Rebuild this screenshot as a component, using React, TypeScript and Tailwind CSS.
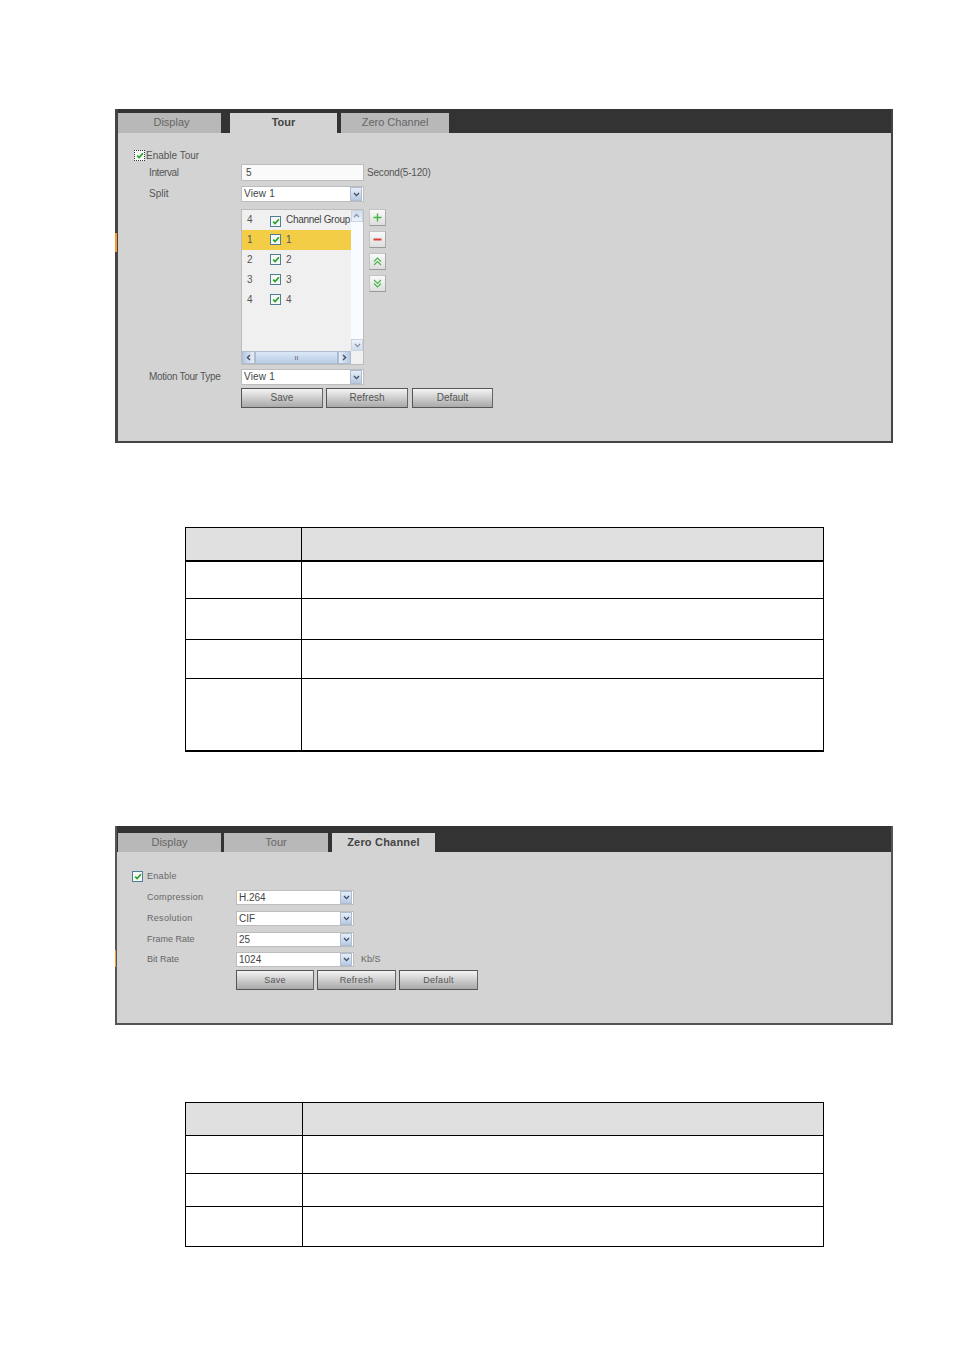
import React from "react";

const font = { fontFamily: '"Liberation Sans", Arial, sans-serif' };

function Tab({ label, active, className = "" }: { label: string; active?: boolean; className?: string }) {
  return (
    <div
      className={`flex items-center justify-center h-full pb-px text-[11px] ${
        active ? "bg-[#d3d3d3] font-bold text-[#444]" : "bg-[#b8b8b8] text-[#666]"
      } ${className}`}
    >
      {label}
    </div>
  );
}

function Check({ className = "" }: { className?: string }) {
  return (
    <span className={`flex items-center justify-center shrink-0 w-[11px] h-[11px] border border-[#4f7f97] bg-[#f6f6f6] ${className}`}>
      <svg width="8" height="7" viewBox="0 0 8 7" fill="none">
        <path d="M1.2 3.6 L3.1 5.6 L6.9 1.2" stroke="#1fa51f" strokeWidth="1.6" />
      </svg>
    </span>
  );
}

function Arrow({ className = "" }: { className?: string }) {
  return (
    <span className={`flex items-center justify-center shrink-0 w-[12px] bg-linear-to-b from-[#e6eef8] to-[#b7c9e2] border border-[#aebcd0] ${className}`}>
      <svg width="7" height="5" viewBox="0 0 7 5" fill="none">
        <path d="M1 1 L3.5 3.6 L6 1" stroke="#3d4b63" strokeWidth="1.3" />
      </svg>
    </span>
  );
}

function Select({ value, className = "" }: { value: string; className?: string }) {
  return (
    <div className={`flex bg-white border border-[#bdbdbd] pr-px ${className}`}>
      <span className="flex-1 pl-[2px] flex items-center text-[10px] text-[#444]">{value}</span>
      <Arrow />
    </div>
  );
}

function Btn({ label, className = "" }: { label: string; className?: string }) {
  return (
    <div
      className={`flex items-center justify-center h-[20px] border border-[#555] border-r-[#666] bg-linear-to-b from-[#f4f4f4] to-[#a9a9a9] text-[#555] ${className}`}
    >
      {label}
    </div>
  );
}

function IconBtn({ children }: { children: React.ReactNode }) {
  return (
    <div className="flex items-center justify-center w-[17px] h-[17px] border border-[#c4c4c4] border-r-[#aaa] border-b-[#999] bg-linear-to-b from-[#fafafa] to-[#dedede]">
      {children}
    </div>
  );
}

function ListRow({ n, label, selected }: { n: string; label: string; selected?: boolean }) {
  return (
    <div className={`flex items-center h-[20px] pl-[5px] text-[10px] text-[#555] ${selected ? "bg-[#f2cd45] text-[#333]" : ""}`}>
      <span className="w-[23px] shrink-0">{n}</span>
      <Check className="mb-px" />
      <span className="ml-[5px]">{label}</span>
    </div>
  );
}

function DocTable({
  rows,
  firstCol,
}: {
  rows: { h: string; head?: boolean; thick?: boolean }[];
  firstCol: string;
}) {
  return (
    <div className="ml-[185px] w-[639px] border-l border-r border-t border-black">
      {rows.map((r, i) => (
        <div
          key={i}
          className={`flex border-black ${r.h} ${r.thick ? "border-b-2" : "border-b"} ${r.head ? "bg-[#e0e0e0]" : "bg-white"}`}
        >
          <div className={`${firstCol} border-r border-black`} />
          <div className="flex-1" />
        </div>
      ))}
    </div>
  );
}

export default function App() {
  return (
    <div style={font} className="relative w-[954px] h-[1350px] bg-white pt-[109px] overflow-hidden">
      {/* Tour panel */}
      <div className="relative ml-[115px] w-[778px] h-[334px] bg-[#d3d3d3] border-l-[3px] border-r-2 border-b-2 border-[#444]">
        <div className="absolute left-[-3px] top-[124px] w-[2px] h-[19px] bg-[#f59a2c]" />
        <div className="flex h-[24px] pt-[4px] bg-[#333]">
          <Tab label="Display" className="w-[103px] pl-[4px]" />
          <Tab label="Tour" active className="w-[107px] ml-[9px]" />
          <Tab label="Zero Channel" className="w-[108px] ml-[4px]" />
        </div>
        <div className="pt-[15px] text-[10px] leading-none text-[#555]">
          <div className="flex items-center h-[14px] pl-[16px]">
            <Check className="border-dotted border-[#333]" />
            <span className="ml-px mt-[2px]">Enable Tour</span>
          </div>
          <div className="flex items-center h-[17px] mt-[2px] pl-[31px]">
            <span className="w-[92px] tracking-[-0.4px]">Interval</span>
            <div className="flex items-center w-[123px] h-full pl-[4px] bg-[#fafafa] border border-[#bdbdbd] text-[#444]">5</div>
            <span className="ml-[3px] tracking-[-0.2px]">Second(5-120)</span>
          </div>
          <div className="flex items-center h-[16px] mt-[5px] pl-[31px]">
            <span className="w-[92px]">Split</span>
            <Select value="View 1" className="w-[123px] h-full tracking-[0.2px]" />
          </div>
          <div className="flex mt-[7px] pl-[123px]">
            <div className="w-[123px] h-[156px] border border-[#bdbdbd] bg-[#f0f0f0] flex flex-col">
              <div className="flex flex-1">
                <div className="w-[109px]">
                  <div className="flex items-center h-[20px] pl-[5px] text-[10px] text-[#555]">
                    <span className="w-[23px] shrink-0">4</span>
                    <Check className="mt-[3px]" />
                    <span className="ml-[5px] text-[#444] tracking-[-0.3px] whitespace-nowrap">Channel Group</span>
                  </div>
                  <ListRow n="1" label="1" selected />
                  <ListRow n="2" label="2" />
                  <ListRow n="3" label="3" />
                  <ListRow n="4" label="4" />
                </div>
                <div className="flex flex-col justify-between w-[12px] bg-[#f8fbff]">
                  <Arrow className="h-[12px] opacity-60 rotate-180" />
                  <Arrow className="h-[12px] opacity-60" />
                </div>
              </div>
              <div className="flex h-[13px]">
                <Arrow className="w-[13px] rotate-90" />
                <div className="w-[83px] flex items-center justify-center bg-linear-to-b from-[#dbe7f6] to-[#b9cde6] border border-[#aebcd0] text-[7px] text-[#555]">
                  ıı
                </div>
                <Arrow className="w-[13px] -rotate-90" />
              </div>
            </div>
            <div className="flex flex-col gap-[5px] ml-[5px]">
              <IconBtn>
                <svg width="9" height="9" viewBox="0 0 9 9"><path d="M4.5 0.5V8.5M0.5 4.5H8.5" stroke="#45b545" strokeWidth="1.4" fill="none" /></svg>
              </IconBtn>
              <IconBtn>
                <svg width="9" height="9" viewBox="0 0 9 9"><path d="M0.5 4.5H8.5" stroke="#d9413c" strokeWidth="2" fill="none" /></svg>
              </IconBtn>
              <IconBtn>
                <svg width="9" height="9" viewBox="0 0 9 9"><path d="M1 4.5L4.5 1L8 4.5M1 8L4.5 4.5L8 8" stroke="#45b545" strokeWidth="1.1" fill="none" /></svg>
              </IconBtn>
              <IconBtn>
                <svg width="9" height="9" viewBox="0 0 9 9"><path d="M1 1L4.5 4.5L8 1M1 4.5L4.5 8L8 4.5" stroke="#45b545" strokeWidth="1.1" fill="none" /></svg>
              </IconBtn>
            </div>
          </div>
          <div className="flex items-center h-[16px] mt-[4px] pl-[31px]">
            <span className="w-[92px] whitespace-nowrap tracking-[-0.3px]">Motion Tour Type</span>
            <Select value="View 1" className="w-[123px] h-full tracking-[0.2px]" />
          </div>
          <div className="flex mt-[3px] pl-[123px]">
            <Btn label="Save" className="w-[82px] text-[10px]" />
            <Btn label="Refresh" className="w-[82px] ml-[3px] text-[10px]" />
            <Btn label="Default" className="w-[81px] ml-[4px] text-[10px]" />
          </div>
        </div>
      </div>

      <div className="h-[84px]" />
      <DocTable
        firstCol="w-[116px]"
        rows={[
          { h: "h-[34px]", head: true, thick: true },
          { h: "h-[37px]" },
          { h: "h-[41px]" },
          { h: "h-[39px]" },
          { h: "h-[73px]", thick: true },
        ]}
      />

      <div className="h-[74px]" />
      {/* Zero Channel panel */}
      <div className="relative ml-[115px] w-[778px] h-[199px] bg-[#d3d3d3] border-l-[2px] border-r-2 border-b-2 border-[#555]">
        <div className="absolute left-[-2px] top-[124px] w-px h-[17px] bg-[#f59a2c]" />
        <div className="flex h-[26px] pt-[7px] pl-px bg-[#333]">
          <Tab label="Display" className="w-[103px]" />
          <Tab label="Tour" className="w-[104px] ml-[3px]" />
          <Tab label="Zero Channel" active className="w-[103px] ml-[4px] tracking-[0.2px]" />
        </div>
        <div className="pt-[19px] pl-[15px] text-[9px] leading-none text-[#666] tracking-[0.3px]">
          <div className="flex items-center h-[11px]">
            <Check />
            <span className="ml-[4px]">Enable</span>
          </div>
          <div className="flex items-center h-[15px] mt-[8px]">
            <span className="ml-[15px] w-[89px]">Compression</span>
            <Select value="H.264" className="w-[118px] h-full tracking-normal" />
          </div>
          <div className="flex items-center h-[15px] mt-[6px]">
            <span className="ml-[15px] w-[89px]">Resolution</span>
            <Select value="CIF" className="w-[118px] h-full tracking-normal" />
          </div>
          <div className="flex items-center h-[15px] mt-[6px]">
            <span className="ml-[15px] w-[89px] tracking-normal">Frame Rate</span>
            <Select value="25" className="w-[118px] h-full tracking-normal" />
          </div>
          <div className="flex items-center h-[15px] mt-[5px]">
            <span className="ml-[15px] w-[89px] tracking-normal">Bit Rate</span>
            <Select value="1024" className="w-[118px] h-full tracking-normal" />
            <span className="ml-[7px] tracking-normal">Kb/S</span>
          </div>
          <div className="flex mt-[3px] ml-[104px]">
            <Btn label="Save" className="w-[78px]" />
            <Btn label="Refresh" className="w-[79px] ml-[3px]" />
            <Btn label="Default" className="w-[79px] ml-[3px]" />
          </div>
        </div>
      </div>

      <div className="h-[77px]" />
      <DocTable
        firstCol="w-[117px]"
        rows={[
          { h: "h-[33px]", head: true },
          { h: "h-[38px]" },
          { h: "h-[33px]" },
          { h: "h-[40px]" },
        ]}
      />
    </div>
  );
}
